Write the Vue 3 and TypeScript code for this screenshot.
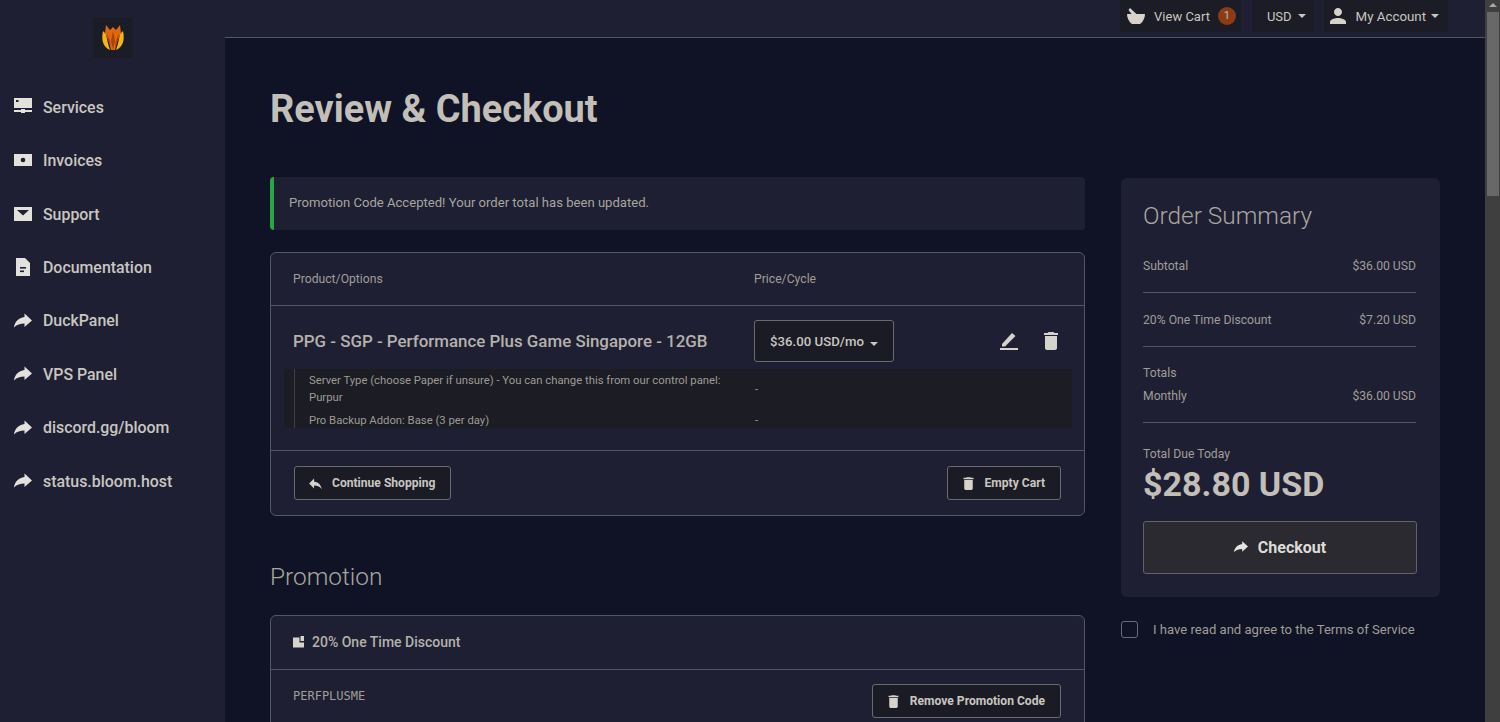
<template>
  <div class="page">
    <aside class="sidebar">
      <div class="logo">
        <svg viewBox="0 0 40 40" width="40" height="40">
          <path d="M10 13c-2 9 0 16 7 19-2-6-3-11-4-16z" fill="#f2b416" />
          <path d="M30 13c2 9 0 16-7 19 2-6 3-11 4-16z" fill="#f2b416" />
          <path d="M13 7l4 5 3-3 3 3 4-5 1 8-4 9-2 8h-4l-2-8-4-9z" fill="#e0660f" />
          <path d="M20 13l2 10-2 9-2-9zM14 15l3 8 1 6-3-7zM26 15l-3 8-1 6 3-7z" fill="#a8430c" />
        </svg>
      </div>
      <nav class="nav">
        <a v-for="item in navItems" :key="item.label" class="nav-item">
          <svg class="nav-icon" viewBox="0 0 18 18" width="18" height="18">
            <template v-if="item.icon === 'server'">
              <rect x="0" y="0" width="18" height="10" />
              <rect x="2" y="2" width="2.500" height="2" fill="#1e1f33" />
              <rect x="0" y="12" width="18" height="2" />
              <rect x="7" y="11" width="4" height="4" />
            </template>
            <template v-else-if="item.icon === 'money'">
              <rect x="0" y="2" width="18" height="12" />
              <circle cx="9" cy="8" r="2.300" fill="#1e1f33" />
            </template>
            <template v-else-if="item.icon === 'mail'">
              <rect x="0" y="2" width="18" height="14" />
              <path d="M3 5h12l-6 5.500z" fill="#1e1f33" />
            </template>
            <template v-else-if="item.icon === 'doc'">
              <path d="M2 0h9l5 5v13H2z" />
              <rect x="6" y="9" width="6" height="1.600" fill="#1e1f33" />
              <rect x="6" y="12.500" width="4" height="1.600" fill="#1e1f33" />
            </template>
            <path v-else d="M10.500 1.500l7.500 7-7.500 6.500v-3.500C6 11.500 3 12.500 0 15.500 .5 10 4.500 6 10.500 5z" />
          </svg>
          <span>{{ item.label }}</span>
        </a>
      </nav>
    </aside>

    <div class="main">
      <header class="topbar">
        <a class="top-btn cart">
          <svg viewBox="0 0 18 16" width="18" height="16" class="light-icon">
            <path d="M0 6h18c0 4-2 8-5 10H5C2 14 0 10 0 6z" />
            <path d="M3 0l7 6.500H5L1.500 2z" />
          </svg>
          <span>View Cart</span>
          <span class="badge">1</span>
        </a>
        <a class="top-btn usd">USD<i class="caret"></i></a>
        <a class="top-btn account">
          <svg viewBox="0 0 24 24" width="24" height="24" class="light-icon">
            <path d="M12 12c2.210 0 4-1.790 4-4s-1.790-4-4-4-4 1.790-4 4 1.790 4 4 4zm0 2c-2.670 0-8 1.340-8 4v2h16v-2c0-2.660-5.330-4-8-4z" />
          </svg>
          <span>My Account</span><i class="caret"></i>
        </a>
      </header>

      <div class="content">
        <h1>Review &amp; Checkout</h1>
        <div class="columns">
          <section class="left">
            <div class="alert">Promotion Code Accepted! Your order total has been updated.</div>

            <div class="card cart-card">
              <div class="card-head">
                <span class="col-product">Product/Options</span>
                <span>Price/Cycle</span>
              </div>
              <div class="card-item">
                <div class="item-row">
                  <span class="col-product item-name">PPG - SGP - Performance Plus Game Singapore - 12GB</span>
                  <button class="cycle-btn">$36.00 USD/mo<i class="caret"></i></button>
                  <div class="item-actions">
                    <svg viewBox="0 0 20 18" width="20" height="18" class="light-icon">
                      <path d="M3 12L13 1l3.500 3L6 14.500H3z" />
                      <rect x="1" y="16" width="18" height="2" />
                    </svg>
                    <svg viewBox="0 0 24 24" width="24" height="24" class="light-icon">
                      <path d="M6 19c0 1.100.9 2 2 2h8c1.100 0 2-.9 2-2V7H6v12zM19 4h-3.500l-1-1h-5l-1 1H5v2h14V4z" />
                    </svg>
                  </div>
                </div>
                <div class="options">
                  <div class="options-inner">
                    <div v-for="opt in options" :key="opt.label" class="option">
                      <span class="option-label">{{ opt.label }}</span>
                      <span class="option-price">-</span>
                    </div>
                  </div>
                </div>
              </div>
              <div class="card-foot">
                <button class="btn">
                  <svg viewBox="0 0 24 24" width="17" height="17" class="light-icon">
                    <path d="M10 9V5l-7 7 7 7v-4.100c5 0 8.500 1.600 11 5.100-1-5-4-10-11-11z" />
                  </svg>
                  Continue Shopping
                </button>
                <button class="btn">
                  <svg viewBox="0 0 24 24" width="17" height="17" class="light-icon">
                    <path d="M6 19c0 1.100.9 2 2 2h8c1.100 0 2-.9 2-2V7H6v12zM19 4h-3.500l-1-1h-5l-1 1H5v2h14V4z" />
                  </svg>
                  Empty Cart
                </button>
              </div>
            </div>

            <h2>Promotion</h2>
            <div class="card promo">
              <div class="promo-head">
                <svg viewBox="0 0 12 12" width="12" height="12" class="light-icon">
                  <path d="M0 1.500h6.500v5H11v5H0z" />
                  <rect x="7.500" y="0" width="3.500" height="5" />
                </svg>
                20% One Time Discount
              </div>
              <div class="promo-body">
                <span class="code">PERFPLUSME</span>
                <button class="btn">
                  <svg viewBox="0 0 24 24" width="17" height="17" class="light-icon">
                    <path d="M6 19c0 1.100.9 2 2 2h8c1.100 0 2-.9 2-2V7H6v12zM19 4h-3.500l-1-1h-5l-1 1H5v2h14V4z" />
                  </svg>
                  Remove Promotion Code
                </button>
              </div>
            </div>
          </section>

          <section class="right">
            <div class="summary">
              <h3>Order Summary</h3>
              <div v-for="row in summaryRows" :key="row.label" class="sum-row">
                <span>{{ row.label }}</span><span>{{ row.value }}</span>
              </div>
              <div class="totals">
                <div class="totals-label">Totals</div>
                <div class="totals-line"><span>Monthly</span><span>$36.00 USD</span></div>
              </div>
              <div class="due-label">Total Due Today</div>
              <div class="due">$28.80 USD</div>
              <button class="checkout">
                <svg viewBox="0 0 18 18" width="14" height="14" class="white-icon">
                  <path d="M10.500 1.500l7.500 7-7.500 6.500v-3.500C6 11.500 3 12.500 0 15.500 .5 10 4.500 6 10.500 5z" />
                </svg>
                Checkout
              </button>
            </div>
            <label class="tos">
              <span class="box"></span>
              <span>I have read and agree to the Terms of Service</span>
            </label>
          </section>
        </div>
      </div>
    </div>

    <div class="scrollbar">
      <div class="arrow"></div>
      <div class="thumb"></div>
    </div>
  </div>
</template>

<script setup lang="ts">
interface NavItem {
  label: string;
  icon: 'server' | 'money' | 'mail' | 'doc' | 'link';
}

const navItems: NavItem[] = [
  { label: 'Services', icon: 'server' },
  { label: 'Invoices', icon: 'money' },
  { label: 'Support', icon: 'mail' },
  { label: 'Documentation', icon: 'doc' },
  { label: 'DuckPanel', icon: 'link' },
  { label: 'VPS Panel', icon: 'link' },
  { label: 'discord.gg/bloom', icon: 'link' },
  { label: 'status.bloom.host', icon: 'link' },
];

const options = [
  { label: 'Server Type (choose Paper if unsure) - You can change this from our control panel: Purpur' },
  { label: 'Pro Backup Addon: Base (3 per day)' },
];

const summaryRows = [
  { label: 'Subtotal', value: '$36.00 USD' },
  { label: '20% One Time Discount', value: '$7.20 USD' },
];
</script>

<style>
html,
body {
  margin: 0;
  overflow: hidden;
}
</style>

<style scoped>
.page {
  display: flex;
  height: 722px;
  overflow: hidden;
  font-family: Roboto, "Liberation Sans", sans-serif;
  background: #0f1325;
  color: #b5b2ab;
}

.sidebar {
  width: 225px;
  flex-shrink: 0;
  background: #1e1f33;
}

.logo {
  width: 40px;
  height: 40px;
  margin: 18px 0 0 93px;
  background: #1a1c26;
}

.logo svg {
  display: block;
}

.nav {
  margin-top: 22.600px;
}

.nav-item {
  display: flex;
  align-items: center;
  height: 53.400px;
  padding-left: 14px;
  gap: 11px;
  font-size: 15.900px;
  font-weight: 500;
  color: #c9c6c0;
}

.nav-icon {
  fill: #e3e1dc;
}

.main {
  flex: 1;
  min-width: 0;
}

.topbar {
  display: flex;
  justify-content: flex-end;
  gap: 10px;
  height: 37px;
  padding-right: 37px;
  background: #1e1f33;
  border-bottom: 1px solid #55565f;
}

.top-btn {
  display: flex;
  align-items: center;
  height: 32px;
  background: #1b1c26;
  font-size: 13px;
  color: #c9c6c0;
}

.cart {
  padding: 0 5px 0 7px;
  gap: 9px;
}

.usd {
  margin-left: 1px;
  padding: 0 8px 0 15px;
}

.account {
  padding: 0 9px 0 2px;
  gap: 6px;
  font-size: 13.300px;
}

.badge {
  width: 18px;
  height: 18px;
  margin-left: -1px;
  border-radius: 50%;
  background: #8b3c14;
  color: #cdb9a8;
  font-size: 11px;
  line-height: 18px;
  text-align: center;
}

.caret {
  display: inline-block;
  margin-left: 6px;
  border-top: 4px solid currentColor;
  border-left: 4px solid transparent;
  border-right: 4px solid transparent;
}

.account .caret {
  margin-left: -1px;
}

.light-icon {
  fill: #d6d3cd;
  flex-shrink: 0;
}

.white-icon {
  fill: #e6e4df;
}

.content {
  padding: 0 45px;
}

h1 {
  margin: 0;
  padding-top: 50px;
  height: 89px;
  font-size: 37.900px;
  font-weight: 700;
  line-height: 42px;
  color: #c2bfb8;
}

.columns {
  display: flex;
  gap: 36px;
  align-items: flex-start;
}

.left {
  width: 815px;
}

.right {
  width: 319px;
  padding-top: 1px;
}

.alert {
  height: 53px;
  box-sizing: border-box;
  padding-left: 15px;
  border-left: 4px solid #28a745;
  border-radius: 4px;
  background: #1e1f33;
  font-size: 13.100px;
  line-height: 52px;
  color: #a8a59f;
}

.card {
  border: 1px solid #55565f;
  border-radius: 6px;
  background: #1e1f33;
}

.cart-card {
  margin-top: 22px;
}

.card-head {
  display: flex;
  align-items: center;
  height: 52px;
  border-bottom: 1px solid #55565f;
  font-size: 12.200px;
  color: #a09d97;
}

.col-product {
  width: 461px;
  padding-left: 22px;
  flex-shrink: 0;
  box-sizing: content-box;
}

.card-item {
  height: 145px;
  box-sizing: border-box;
  padding-top: 14px;
  border-bottom: 1px solid #55565f;
}

.item-row {
  display: flex;
  align-items: center;
  height: 42px;
}

.item-name {
  font-size: 16.900px;
  font-weight: 500;
  color: #b5b2ab;
  white-space: nowrap;
}

.cycle-btn {
  width: 140px;
  height: 42px;
  padding: 0;
  border: 1px solid #6a6b72;
  border-radius: 3px;
  background: #1a1b25;
  color: #c9c6c0;
  font-family: inherit;
  font-size: 13.200px;
  font-weight: 500;
}

.item-actions {
  display: flex;
  align-items: center;
  gap: 20px;
  margin-left: auto;
  padding-right: 21px;
}

.options {
  height: 59px;
  margin: 7px 12px 0 13px;
  padding-left: 10px;
  background: #1b1c24;
}

.options-inner {
  display: flex;
  flex-direction: column;
  gap: 6px;
  height: 100%;
  box-sizing: border-box;
  border-left: 1px solid #3c3d45;
  padding-top: 3px;
}

.option {
  display: flex;
  align-items: center;
  font-size: 11.300px;
  line-height: 17px;
  color: #9e9b95;
}

.option-label {
  width: 445px;
  flex-shrink: 0;
  padding-left: 14px;
  box-sizing: border-box;
}

.option-price {
  padding-left: 15px;
}

.card-foot {
  display: flex;
  justify-content: space-between;
  align-items: center;
  height: 64px;
  padding: 0 23px;
}

.btn {
  display: flex;
  align-items: center;
  gap: 8px;
  height: 34px;
  padding: 0 15px 0 12px;
  border: 1px solid #6a6b72;
  border-radius: 3px;
  background: #1a1b25;
  color: #c9c6c0;
  font-family: inherit;
  font-size: 12.100px;
  font-weight: 700;
}

h2 {
  margin: 46px 0 23px;
  font-size: 24.400px;
  font-weight: 300;
  line-height: 30px;
  color: #a9a69f;
}

.promo-head {
  display: flex;
  align-items: center;
  gap: 7px;
  height: 52px;
  padding: 0 0 1px 22px;
  border-bottom: 1px solid #55565f;
  font-size: 14px;
  font-weight: 500;
  color: #b5b2ab;
}

.promo-body {
  display: flex;
  justify-content: space-between;
  padding: 14px 23px 20px 22px;
}

.code {
  padding-top: 5px;
  font-family: "DejaVu Sans Mono", monospace;
  font-size: 12px;
  color: #a09d97;
}

.summary {
  box-sizing: border-box;
  height: 419px;
  padding: 23px 24px 0 22px;
  border-radius: 6px;
  background: #1e1f33;
}

h3 {
  margin: 0 0 20px;
  font-size: 24.400px;
  font-weight: 300;
  line-height: 30px;
  color: #a9a69f;
}

.sum-row,
.totals-line {
  display: flex;
  justify-content: space-between;
  font-size: 12.200px;
  line-height: 15px;
  color: #a09d97;
}

.sum-row {
  height: 53.600px;
  box-sizing: border-box;
  padding-top: 20px;
  border-bottom: 1px solid #55565f;
}

.sum-row:first-of-type {
  height: 42px;
  padding-top: 8px;
}

.totals {
  padding-top: 19px;
  height: 76.400px;
  box-sizing: border-box;
  border-bottom: 1px solid #55565f;
  font-size: 12.200px;
  color: #a09d97;
}

.totals-label {
  line-height: 15px;
  margin-bottom: 8px;
}

.due-label {
  margin-top: 24px;
  font-size: 12.200px;
  line-height: 15px;
  color: #a09d97;
}

.due {
  margin-top: 2px;
  font-size: 34px;
  font-weight: 700;
  line-height: 40px;
  color: #c2bfb8;
}

.checkout {
  display: flex;
  align-items: center;
  justify-content: center;
  gap: 10px;
  width: calc(100% + 1px);
  height: 53px;
  margin-top: 17px;
  border: 1px solid #62636a;
  border-radius: 3px;
  background: #2a2a30;
  color: #dedcd7;
  font-family: inherit;
  font-size: 16px;
  font-weight: 700;
}

.tos {
  display: flex;
  align-items: center;
  gap: 15px;
  margin-top: 24px;
  font-size: 13.100px;
  color: #a09d97;
}

.box {
  width: 15px;
  height: 15px;
  border: 1px solid #6a6b72;
  border-radius: 3px;
}

.scrollbar {
  width: 15px;
  flex-shrink: 0;
  padding: 0 1px 0 2px;
  box-sizing: border-box;
  background: #3f3f3f;
}

.arrow {
  height: 12px;
  position: relative;
}

.arrow::after {
  content: "";
  position: absolute;
  left: 2px;
  top: 3px;
  border-bottom: 4px solid #a8a8a8;
  border-left: 4px solid transparent;
  border-right: 4px solid transparent;
}

.thumb {
  height: 184px;
  background: #686868;
}
</style>
